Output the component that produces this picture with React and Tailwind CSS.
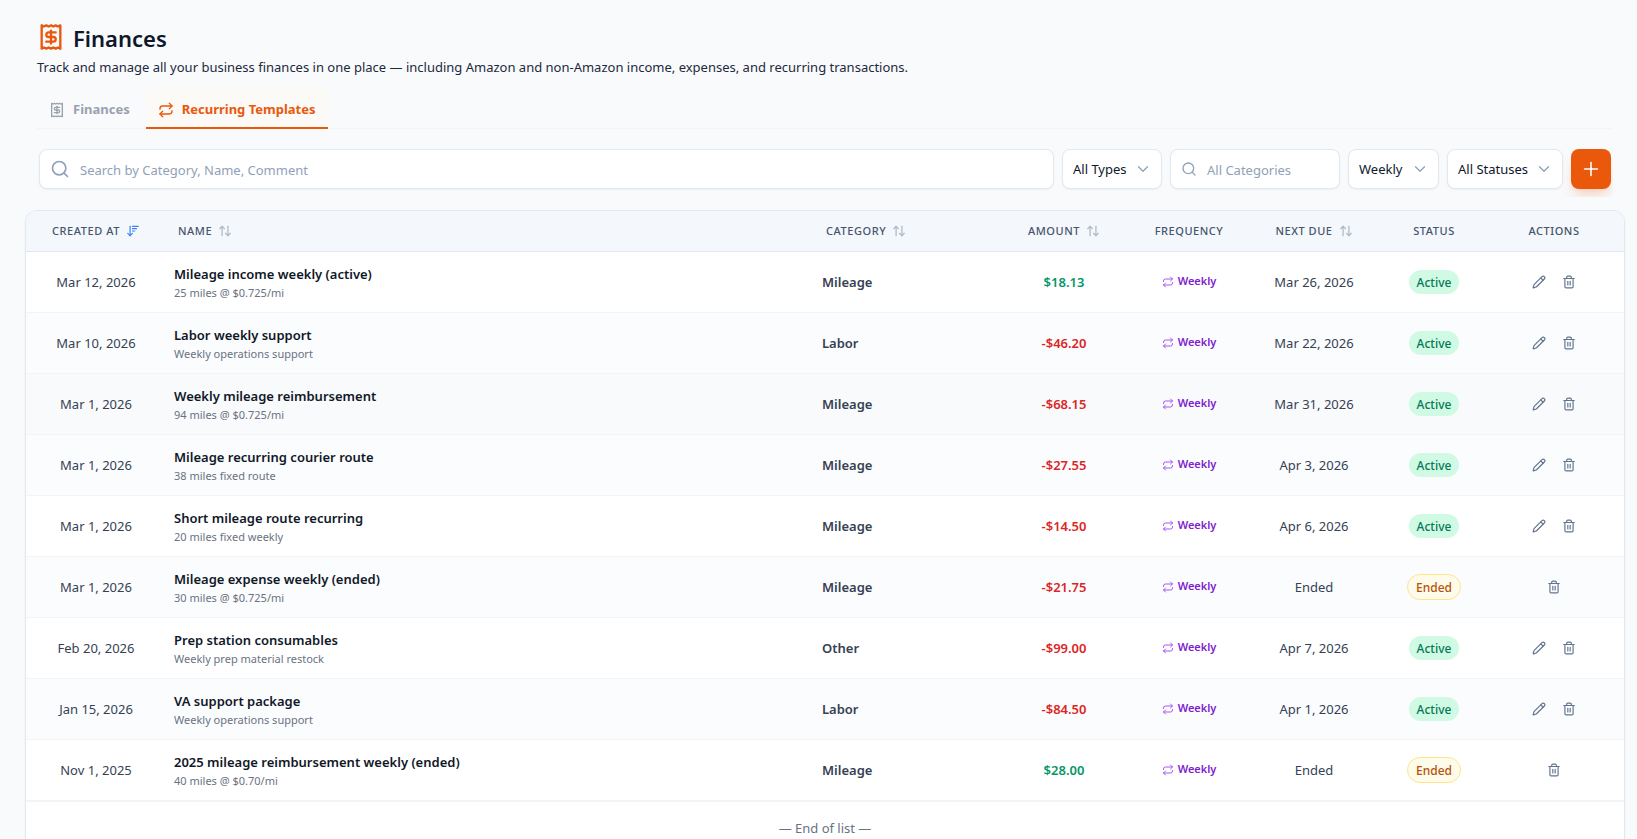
import {
  ArrowDownWideNarrow,
  ArrowUpDown,
  ChevronDown,
  Pencil,
  Plus,
  Repeat,
  Search,
  Trash2,
} from "lucide-react";
import { LuReceipt } from "react-icons/lu";

const templates = [
  { created: "Mar 12, 2026", name: "Mileage income weekly (active)", note: "25 miles @ $0.725/mi", category: "Mileage", amount: "$18.13", due: "Mar 26, 2026", active: true },
  { created: "Mar 10, 2026", name: "Labor weekly support", note: "Weekly operations support", category: "Labor", amount: "-$46.20", due: "Mar 22, 2026", active: true },
  { created: "Mar 1, 2026", name: "Weekly mileage reimbursement", note: "94 miles @ $0.725/mi", category: "Mileage", amount: "-$68.15", due: "Mar 31, 2026", active: true, highlighted: true },
  { created: "Mar 1, 2026", name: "Mileage recurring courier route", note: "38 miles fixed route", category: "Mileage", amount: "-$27.55", due: "Apr 3, 2026", active: true },
  { created: "Mar 1, 2026", name: "Short mileage route recurring", note: "20 miles fixed weekly", category: "Mileage", amount: "-$14.50", due: "Apr 6, 2026", active: true },
  { created: "Mar 1, 2026", name: "Mileage expense weekly (ended)", note: "30 miles @ $0.725/mi", category: "Mileage", amount: "-$21.75", due: "Ended", active: false },
  { created: "Feb 20, 2026", name: "Prep station consumables", note: "Weekly prep material restock", category: "Other", amount: "-$99.00", due: "Apr 7, 2026", active: true },
  { created: "Jan 15, 2026", name: "VA support package", note: "Weekly operations support", category: "Labor", amount: "-$84.50", due: "Apr 1, 2026", active: true },
  { created: "Nov 1, 2025", name: "2025 mileage reimbursement weekly (ended)", note: "40 miles @ $0.70/mi", category: "Mileage", amount: "$28.00", due: "Ended", active: false },
];

function FilterSelect({ label, options, className }) {
  return (
    <div className={"relative shrink-0 " + className}>
      <select
        aria-label={label}
        className="h-10 w-full appearance-none rounded-lg border border-slate-200 bg-white pt-0.5 pr-7 pl-2.5 text-[13px] text-slate-900 shadow-xs outline-none"
      >
        {options.map((option) => (
          <option key={option}>{option}</option>
        ))}
      </select>
      <ChevronDown className="pointer-events-none absolute top-[11px] right-2.5 size-[18px] text-slate-400" strokeWidth={1.75} />
    </div>
  );
}

function SortButton({ children, sorted }) {
  return (
    <button type="button" className="inline-flex items-center gap-1.5 uppercase tracking-wider">
      {children}
      {sorted ? (
        <ArrowDownWideNarrow className="size-3.5 text-[#3b82f6]" />
      ) : (
        <ArrowUpDown className="size-3.5 text-[#b4bcc8]" strokeWidth={2.25} />
      )}
    </button>
  );
}

function StatusBadge({ active }) {
  return active ? (
    <span className="inline-flex h-6 items-center rounded-full bg-[#d1fae5] px-2 pt-0.5 text-[12px] font-medium text-[#047857]">Active</span>
  ) : (
    <span className="inline-flex h-[26px] items-center rounded-full border border-[#fde68a] bg-[#fffbeb] px-2 pt-0.5 text-[12px] font-medium text-[#b45309]">Ended</span>
  );
}

function TemplateRow({ item }) {
  const amountColor = item.amount.startsWith("-") ? "text-[#dc2626]" : "text-[#059669]";
  const background = item.highlighted ? "bg-[#f9fafc]" : "odd:bg-white even:bg-[#fbfcfe]";
  return (
    <tr className={"h-[61px] border-b border-gray-100 " + background}>
      <td className="pt-0.5 text-center text-gray-700">{item.created}</td>
      <td className="px-2 pt-0.5">
        <div className="leading-5 font-semibold text-gray-900">{item.name}</div>
        <div className="text-[11px] leading-[18px] text-gray-500">{item.note}</div>
      </td>
      <td className="px-2 pt-0.5 font-semibold text-gray-700">{item.category}</td>
      <td className={"pt-0.5 text-center font-semibold " + amountColor}>{item.amount}</td>
      <td>
        <div className="flex items-center justify-center gap-1 text-[11px] font-semibold text-[#7e22ce]">
          <Repeat className="size-3 text-[#a855f7]" />
          Weekly
        </div>
      </td>
      <td className="pt-0.5 text-center text-gray-700">{item.due}</td>
      <td className="text-center">
        <StatusBadge active={item.active} />
      </td>
      <td>
        <div className="flex items-center justify-center gap-1.5 text-slate-500">
          {item.active && (
            <button type="button" aria-label={"Edit " + item.name} className="flex size-6 items-center justify-center">
              <Pencil className="size-3.5" />
            </button>
          )}
          <button type="button" aria-label={"Delete " + item.name} className="flex size-6 items-center justify-center">
            <Trash2 className="size-3.5" />
          </button>
        </div>
      </td>
    </tr>
  );
}

export default function App() {
  return (
    <main className="h-screen overflow-y-auto bg-[#f9fafc] pt-5 pr-6 pl-[37px] font-['Noto_Sans',sans-serif] text-[13px] text-slate-800 [scrollbar-width:none]">
      <header>
        <div className="flex items-center gap-2">
          <LuReceipt className="size-7 -translate-y-px text-[#ea580c]" />
          <h1 className="text-[22px] leading-9 font-semibold text-slate-900">Finances</h1>
        </div>
        <p className="leading-[22px]">
          Track and manage all your business finances in one place — including Amazon and non-Amazon income, expenses, and recurring transactions.
        </p>
      </header>

      <nav aria-label="Finance sections" className="mt-2.5 flex gap-1 border-b border-slate-100 font-bold">
        <a href="#finances" className="flex h-10 items-center gap-2 px-3 pt-1 text-gray-400">
          <LuReceipt className="size-4" />
          Finances
        </a>
        <a
          href="#recurring"
          aria-current="page"
          className="-mb-px flex h-[41px] items-center gap-2 rounded-t-lg border-b-2 border-[#ea580c] bg-[#fbfaf7] px-3 pt-1 text-[#ea580c]"
        >
          <Repeat className="size-4" />
          Recurring Templates
        </a>
      </nav>

      <div className="flex gap-2 overflow-hidden px-0.5 pt-5 pb-2">
        <div className="relative grow">
          <Search className="absolute top-2.5 left-[11px] size-5 text-slate-400" />
          <input
            type="text"
            aria-label="Search templates"
            placeholder="Search by Category, Name, Comment"
            className="h-10 w-full rounded-lg border border-slate-200 bg-white pt-0.5 pr-3 pl-10 shadow-xs outline-none placeholder:text-slate-400"
          />
        </div>
        <FilterSelect label="Type" options={["All Types", "Income", "Expense"]} className="w-[100px]" />
        <div className="relative w-[170px] shrink-0">
          <Search className="absolute top-3 left-[11px] size-4 text-slate-400" />
          <input
            type="text"
            aria-label="Category"
            placeholder="All Categories"
            className="h-10 w-full rounded-lg border border-slate-200 bg-white pt-0.5 pr-3 pl-9 shadow-xs outline-none placeholder:text-slate-400"
          />
        </div>
        <FilterSelect label="Frequency" options={["Weekly", "Monthly"]} className="w-[91px]" />
        <FilterSelect label="Status" options={["All Statuses", "Active", "Ended"]} className="w-[116px]" />
        <button
          type="button"
          aria-label="Add recurring template"
          className="flex size-10 shrink-0 items-center justify-center rounded-lg bg-[#ea580c] text-white shadow-lg shadow-[#ea580c]/20"
        >
          <Plus className="size-[22px]" strokeWidth={1.75} />
        </button>
      </div>

      <section className="-mx-3 mt-[13px] overflow-hidden rounded-xl border border-slate-200 bg-white shadow-xs">
        <table className="w-full table-fixed border-collapse">
          <colgroup>
            <col className="w-[140px]" />
            <col />
            <col className="w-[180px]" />
            <col className="w-[140px]" />
            <col className="w-[110px]" />
            <col className="w-[140px]" />
            <col className="w-[100px]" />
            <col className="w-[140px]" />
          </colgroup>
          <thead>
            <tr className="h-10 border-b border-slate-200 bg-[#f4f7fc] text-[11px] tracking-wider text-slate-600 uppercase [&>th]:font-medium">
              <th scope="col"><SortButton sorted>Created at</SortButton></th>
              <th scope="col" className="px-3 text-left"><SortButton>Name</SortButton></th>
              <th scope="col" className="px-3 text-left"><SortButton>Category</SortButton></th>
              <th scope="col"><SortButton>Amount</SortButton></th>
              <th scope="col">Frequency</th>
              <th scope="col"><SortButton>Next due</SortButton></th>
              <th scope="col">Status</th>
              <th scope="col">Actions</th>
            </tr>
          </thead>
          <tbody>
            {templates.map((item) => (
              <TemplateRow key={item.name} item={item} />
            ))}
          </tbody>
        </table>
        <p className="border-t border-gray-100 py-4 text-center leading-5 text-gray-500">— End of list —</p>
      </section>
    </main>
  );
}
